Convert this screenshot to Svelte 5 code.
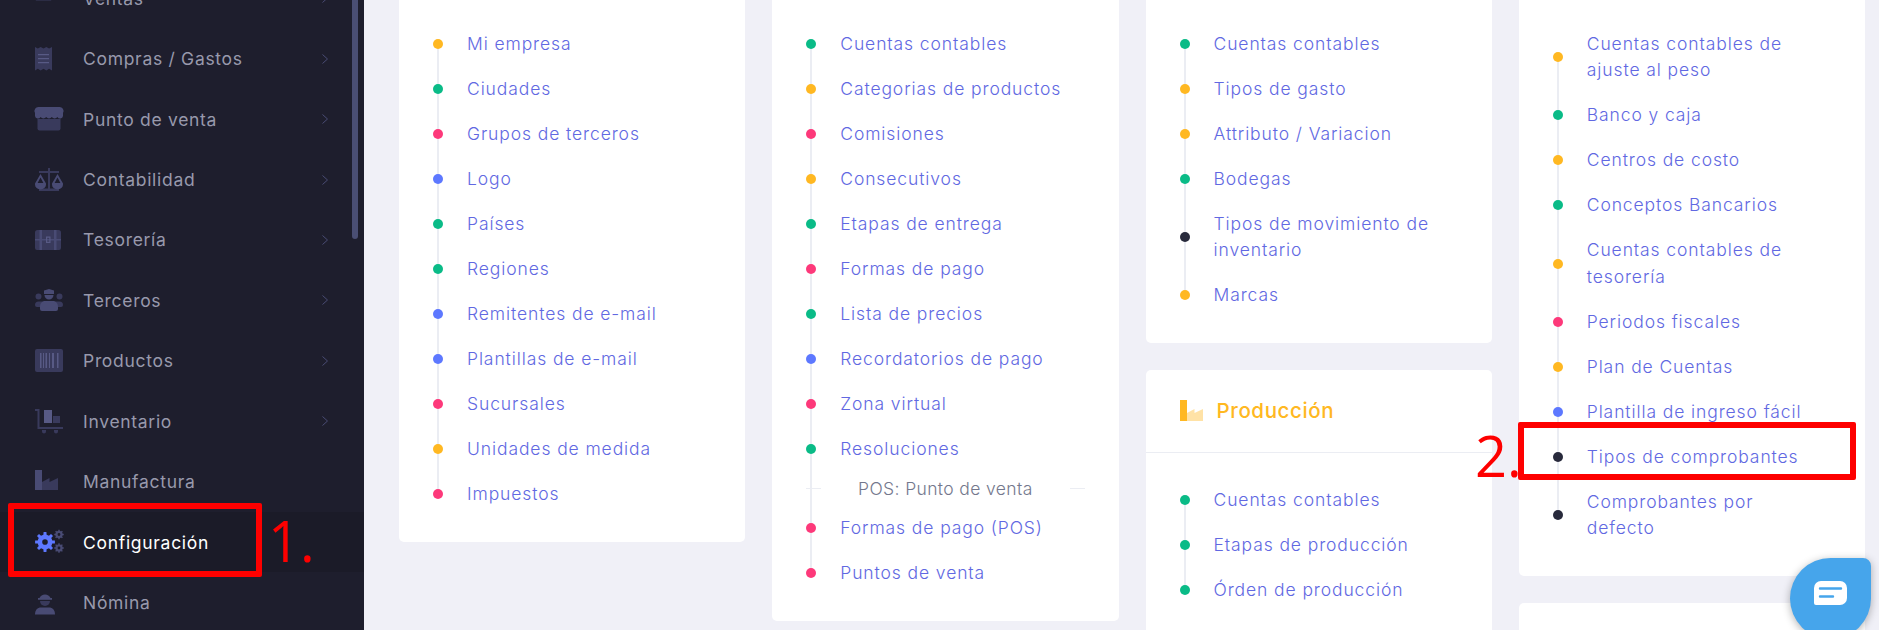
<script>
	function gear(cx, cy, outer, inner, hole, teeth) {
		let d = '';
		const step = (Math.PI * 2) / teeth;
		for (let i = 0; i < teeth; i++) {
			const a = i * step;
			const pts = [
				[inner, a - step * 0.5],
				[inner, a - step * 0.28],
				[outer, a - step * 0.18],
				[outer, a + step * 0.18],
				[inner, a + step * 0.28]
			];
			for (const [r, t] of pts) {
				d += (d ? 'L' : 'M') + (cx + r * Math.cos(t)).toFixed(2) + ' ' + (cy + r * Math.sin(t)).toFixed(2);
			}
		}
		d += `ZM${cx - hole} ${cy}a${hole} ${hole} 0 1 0 ${hole * 2} 0a${hole} ${hole} 0 1 0 ${-hole * 2} 0Z`;
		return d;
	}

	const solid = '#494b74';
	const faded = '#393a5c';
	const light = '#585a85';

	const icons = {
		ventas: [
			{ d: 'M0-8h17v20.5a2 2 0 0 1-2 2H2a2 2 0 0 1-2-2z', c: faded },
			{ d: 'M10 9.5h4v1.4h-4z', c: light }
		],
		compras: [
			{ d: 'M0 0l2.8 1.6L5.7 0l2.8 1.6L11.3 0l2.8 1.6L17 0v23.4l-2.9-1.6-2.8 1.6-2.8-1.6-2.8 1.6-2.9-1.6L0 23.4z', c: faded },
			{ d: 'M3 7h11v1.2H3zM3 11h11v1.2H3zM3 15h11v1.2H3z', c: light }
		],
		punto: [
			{ d: 'M2.5 12h23v9.5a2 2 0 0 1-2 2h-19a2 2 0 0 1-2-2z', c: faded },
			{ d: 'M4 0h20a4 4 0 0 1 4 6v3a3 3 0 0 1-5.6 1 3.4 3.4 0 0 1-5.6 0 3.4 3.4 0 0 1-5.6 0 3.4 3.4 0 0 1-5.6 0A3 3 0 0 1 0 9V6a4 4 0 0 1 4-6z', c: solid }
		],
		conta: [
			{ d: 'M13 0h2v21h-2zM4 3h20v2H4zM4 20.5h20v2.5H4z', c: faded },
			{ d: 'M5.5 6l5.5 9.5v1a5.5 5 0 0 1-11 0v-1zM5.5 9.5L2.6 15h5.8z', c: solid, rule: 'evenodd' },
			{ d: 'M22.5 6l5.5 9.5v1a5.5 5 0 0 1-11 0v-1zM22.5 9.5L19.6 15h5.8z', c: solid, rule: 'evenodd' }
		],
		tesoreria: [
			{ d: 'M2.5 2h21a2.5 2.5 0 0 1 2.500 2.500V20a2 2 0 0 1-2 2H2a2 2 0 0 1-2-2V4.500A2.500 2.500 0 0 1 2.500 2z', c: faded },
			{ d: 'M4.500 2H7v20H4.500zM19 2h2.500v20H19zM0 11h26v1.500H0z', c: solid },
			{ d: 'M11 8.500h4.500V15H11zM12.200 9.800v3.900h2.100V9.800z', c: light, rule: 'evenodd' }
		],
		terceros: [
			{ d: 'M3.500 5.500a3 3 0 1 1 0 6 3 3 0 0 1 0-6zM24.500 5.500a3 3 0 1 1 0 6 3 3 0 0 1 0-6zM0 17a3.500 3.500 0 0 1 3.500-3.500H8L6 19H2a2 2 0 0 1-2-2zM28 17a3.500 3.500 0 0 0-3.500-3.500H20l2 5.500h4a2 2 0 0 0 2-2z', c: faded },
			{ d: 'M9 2.500L14 1l5 1.500V6H9zM9.500 7h9a4.500 4.500 0 0 1-9 0zM10 13h8c3 0 5 2.500 5 6v2a2 2 0 0 1-2 2H7a2 2 0 0 1-2-2v-2c0-3.500 2-6 5-6z', c: solid }
		],
		productos: [
			{ d: 'M2 0h24a2 2 0 0 1 2 2v19a2 2 0 0 1-2 2H2a2 2 0 0 1-2-2V2a2 2 0 0 1 2-2z', c: faded },
			{ d: 'M5 4h1.500v15H5zM8 4h1v15H8zM10.500 4h1.500v15h-1.500zM14 4h1v15h-1zM17 4h2v15h-2zM22 4h1.500v15H22z', c: light }
		],
		inventario: [
			{ d: 'M0 0h4.500v18H28v2H2.500V2H0zM7 21h4v1.500a2 2 0 0 1-4 0zM19 21h4v1.500a2 2 0 0 1-4 0z', c: faded },
			{ d: 'M9 1h8v13H9z', c: light },
			{ d: 'M18 7h7v7h-7z', c: faded }
		],
		manufactura: [
			{ d: 'M7 20v-8l7.500-4v4L23 8v12z', c: faded },
			{ d: 'M0 0h7v20H0z', c: solid }
		],
		config: [
			{ d: gear(10, 12, 10, 7.4, 2.800, 8), c: '#5d78ff' },
			{ d: gear(24, 4.500, 4.800, 3.700, 1.400, 8), c: solid },
			{ d: gear(24, 18, 4.800, 3.700, 1.400, 8), c: solid }
		],
		nomina: [
			{ d: 'M4.500 7a6 6 0 0 1 11 0z', c: solid },
			{ d: 'M3 7h14v1.800H3z', c: solid },
			{ d: 'M5 10h10a5 5 0 0 1-10 0z', c: faded },
			{ d: 'M6 16.500h8c3.500 0 6 2.500 6 7H0c0-4.500 2.500-7 6-7z', c: solid }
		]
	};

	const nav = [
		{ label: 'Ventas', icon: 'ventas', arrow: true },
		{ label: 'Compras / Gastos', icon: 'compras', arrow: true },
		{ label: 'Punto de venta', icon: 'punto', arrow: true },
		{ label: 'Contabilidad', icon: 'conta', arrow: true },
		{ label: 'Tesorería', icon: 'tesoreria', arrow: true },
		{ label: 'Terceros', icon: 'terceros', arrow: true },
		{ label: 'Productos', icon: 'productos', arrow: true },
		{ label: 'Inventario', icon: 'inventario', arrow: true },
		{ label: 'Manufactura', icon: 'manufactura' },
		{ label: 'Configuración', icon: 'config', active: true },
		{ label: 'Nómina', icon: 'nomina' }
	];

	const col1 = [
		['Mi empresa', 'yellow'],
		['Ciudades', 'green'],
		['Grupos de terceros', 'pink'],
		['Logo', 'blue'],
		['Países', 'green'],
		['Regiones', 'green'],
		['Remitentes de e-mail', 'blue'],
		['Plantillas de e-mail', 'blue'],
		['Sucursales', 'pink'],
		['Unidades de medida', 'yellow'],
		['Impuestos', 'pink']
	];
	const col2 = [
		['Cuentas contables', 'green'],
		['Categorias de productos', 'yellow'],
		['Comisiones', 'pink'],
		['Consecutivos', 'yellow'],
		['Etapas de entrega', 'green'],
		['Formas de pago', 'pink'],
		['Lista de precios', 'green'],
		['Recordatorios de pago', 'blue'],
		['Zona virtual', 'pink'],
		['Resoluciones', 'green'],
		['POS: Punto de venta', 'sep'],
		['Formas de pago (POS)', 'pink'],
		['Puntos de venta', 'pink']
	];
	const col3 = [
		['Cuentas contables', 'green'],
		['Tipos de gasto', 'yellow'],
		['Attributo / Variacion', 'yellow'],
		['Bodegas', 'green'],
		['Tipos de movimiento de inventario', 'dark'],
		['Marcas', 'yellow']
	];
	const produccion = [
		['Cuentas contables', 'green'],
		['Etapas de producción', 'green'],
		['Órden de producción', 'green']
	];
	const col4 = [
		['Cuentas contables de ajuste al peso', 'yellow'],
		['Banco y caja', 'green'],
		['Centros de costo', 'yellow'],
		['Conceptos Bancarios', 'green'],
		['Cuentas contables de tesorería', 'yellow'],
		['Periodos fiscales', 'pink'],
		['Plan de Cuentas', 'yellow'],
		['Plantilla de ingreso fácil', 'blue'],
		['Tipos de comprobantes', 'dark'],
		['Comprobantes por defecto', 'dark']
	];
</script>

{#snippet timeline(items)}
	<ul class="timeline">
		{#each items as [text, kind]}
			{#if kind === 'sep'}
				<li class="sep"><i></i><span>{text}</span><i></i></li>
			{:else}
				<li><b class="dot {kind}"></b><a href="#top">{text}</a></li>
			{/if}
		{/each}
	</ul>
{/snippet}

<div class="layout">
	<aside class="sidebar">
		<nav>
			{#each nav as item}
				<div class="nav-row" class:active={item.active}>
					<svg class="nav-icon" width="28" height="24" viewBox="0 0 28 24" aria-hidden="true">
						{#each icons[item.icon] as p}
							<path d={p.d} fill={p.c} fill-rule={p.rule ?? 'nonzero'} />
						{/each}
					</svg>
					<span>{item.label}</span>
					{#if item.arrow}
						<svg class="chevron" width="6" height="10" viewBox="0 0 6 10" aria-hidden="true">
							<path d="M.5.5 5.500 5 .5 9.500" fill="none" stroke="#494b74" />
						</svg>
					{/if}
				</div>
			{/each}
		</nav>
		<div class="scrollbar"></div>
	</aside>

	<main>
		<div class="col">
			<section class="card">
				<div class="body">{@render timeline(col1)}</div>
			</section>
		</div>
		<div class="col">
			<section class="card">
				<div class="body">{@render timeline(col2)}</div>
			</section>
		</div>
		<div class="col">
			<section class="card">
				<div class="body">{@render timeline(col3)}</div>
			</section>
			<section class="card">
				<header>
					<svg width="23" height="21" viewBox="0 0 23 21" aria-hidden="true">
						<path d="M7 21v-8l7.500-4v4L23 9v12z" fill="#ffe2a6" />
						<path d="M0 0h7v21H0z" fill="#ffb822" />
					</svg>
					<h3>Producción</h3>
				</header>
				<div class="body">{@render timeline(produccion)}</div>
			</section>
		</div>
		<div class="col">
			<section class="card">
				<div class="body">{@render timeline(col4)}</div>
			</section>
			<section class="card stub"></section>
		</div>
	</main>

	<div class="mark one"></div>
	<div class="mark-label one">1.</div>
	<div class="mark two"></div>
	<div class="mark-label two">2.</div>

	<button class="chat" aria-label="Chat">
		<svg width="33" height="24" viewBox="0 0 33 24" aria-hidden="true">
			<path d="M7 0h19a7 7 0 0 1 7 7v10a7 7 0 0 1-7 7H2a2 2 0 0 1-2-2V7a7 7 0 0 1 7-7z" fill="#fff" />
			<path d="M6 7.500h21M6 15.500h13" stroke="#46a5eb" stroke-width="2.400" stroke-linecap="round" fill="none" />
		</svg>
	</button>
</div>

<style>
	:global(body) {
		overflow: hidden;
		background: #f0f0f7;
	}

	.layout {
		position: relative;
		display: flex;
		height: 630px;
		overflow: hidden;
		font-family: Inter, 'Open Sans', sans-serif;
	}

	.sidebar {
		position: relative;
		flex: 0 0 364px;
		overflow: hidden;
		background: #1e1e2d;
	}

	nav {
		margin-top: -32px;
	}

	.nav-row {
		display: flex;
		align-items: center;
		height: 60.45px;
		padding: 0 36px 0 35px;
		color: #9899ac;
		font-size: 17.5px;
		letter-spacing: 0.7px;
	}

	.nav-row.active {
		background: #1b1b28;
		color: #fff;
	}

	.nav-icon {
		flex: 0 0 28px;
		margin-right: 20px;
		overflow: visible;
	}

	.chevron {
		margin-left: auto;
	}

	.scrollbar {
		position: absolute;
		top: 0;
		left: 352px;
		width: 6px;
		height: 239px;
		border-radius: 0 0 3px 3px;
		background: #4a4e73;
	}

	main {
		display: grid;
		flex: 1;
		grid-template-columns: repeat(4, 1fr);
		gap: 27px;
		align-items: start;
		padding: 0 14px 0 35px;
	}

	.col {
		display: flex;
		flex-direction: column;
		gap: 27px;
	}

	.card {
		overflow: hidden;
		border-radius: 0 0 5px 5px;
		background: #fff;
	}

	.col .card + .card {
		border-radius: 5px;
	}

	.stub {
		height: 60px;
	}

	header {
		display: flex;
		align-items: center;
		gap: 14px;
		height: 82px;
		padding: 0 34px;
		border-bottom: 1px solid #ebedf3;
	}

	h3 {
		margin: 0;
		color: #ffb822;
		font-size: 20.5px;
		font-weight: 500;
		letter-spacing: 0.6px;
	}

	.body {
		padding: 21.5px 38px 25px 34px;
	}

	section + section .body {
		padding-top: 25px;
	}

	.timeline {
		margin: 0;
		padding: 0;
		list-style: none;
	}

	li {
		position: relative;
		display: flex;
		align-items: center;
		padding: 9.3px 0;
		font-size: 17.5px;
		letter-spacing: 0.9px;
		line-height: 26.4px;
	}

	li::before {
		content: '';
		position: absolute;
		top: 0;
		bottom: 0;
		left: 4px;
		width: 2px;
		background: #ebedf3;
	}

	li:first-child::before {
		top: 50%;
	}

	li:last-child::before {
		bottom: 50%;
	}

	.dot {
		position: relative;
		flex: 0 0 10px;
		height: 10px;
		margin-right: 24px;
		border-radius: 50%;
	}

	.dot.yellow {
		background: #ffb822;
	}

	.dot.green {
		background: #0abb87;
	}

	.dot.pink {
		background: #fd397a;
	}

	.dot.blue {
		background: #5d78ff;
	}

	.dot.dark {
		background: #282a3c;
	}

	a {
		color: #6168e2;
		font-weight: 300;
		text-decoration: none;
	}

	li.sep {
		justify-content: space-between;
		margin-right: -4px;
		padding: 4px 0;
		color: #74788d;
		font-weight: 300;
		letter-spacing: 0.37px;
	}

	li.sep i {
		position: relative;
		width: 15px;
		height: 1px;
		background: #ebedf3;
	}

	.mark {
		position: absolute;
		box-sizing: border-box;
		border: 6px solid #fe0000;
		border-radius: 2px;
	}

	.mark.one {
		top: 503px;
		left: 8px;
		width: 254px;
		height: 74px;
	}

	.mark.two {
		top: 422px;
		left: 1518px;
		width: 338px;
		height: 58px;
	}

	.mark-label {
		position: absolute;
		color: #fe0000;
		font-family: 'Open Sans', sans-serif;
		font-size: 56px;
		line-height: 1;
	}

	.mark-label.one {
		top: 512px;
		left: 268px;
	}

	.mark-label.two {
		top: 427px;
		left: 1475px;
	}

	.chat {
		position: absolute;
		top: 558px;
		left: 1790px;
		display: flex;
		align-items: center;
		justify-content: center;
		width: 81px;
		height: 81px;
		padding: 0 0 12px;
		border: 0;
		border-radius: 50% 8px 50% 50%;
		background: #46a5eb;
		box-shadow: 0 2px 8px rgba(0, 0, 0, 0.3);
	}
</style>
